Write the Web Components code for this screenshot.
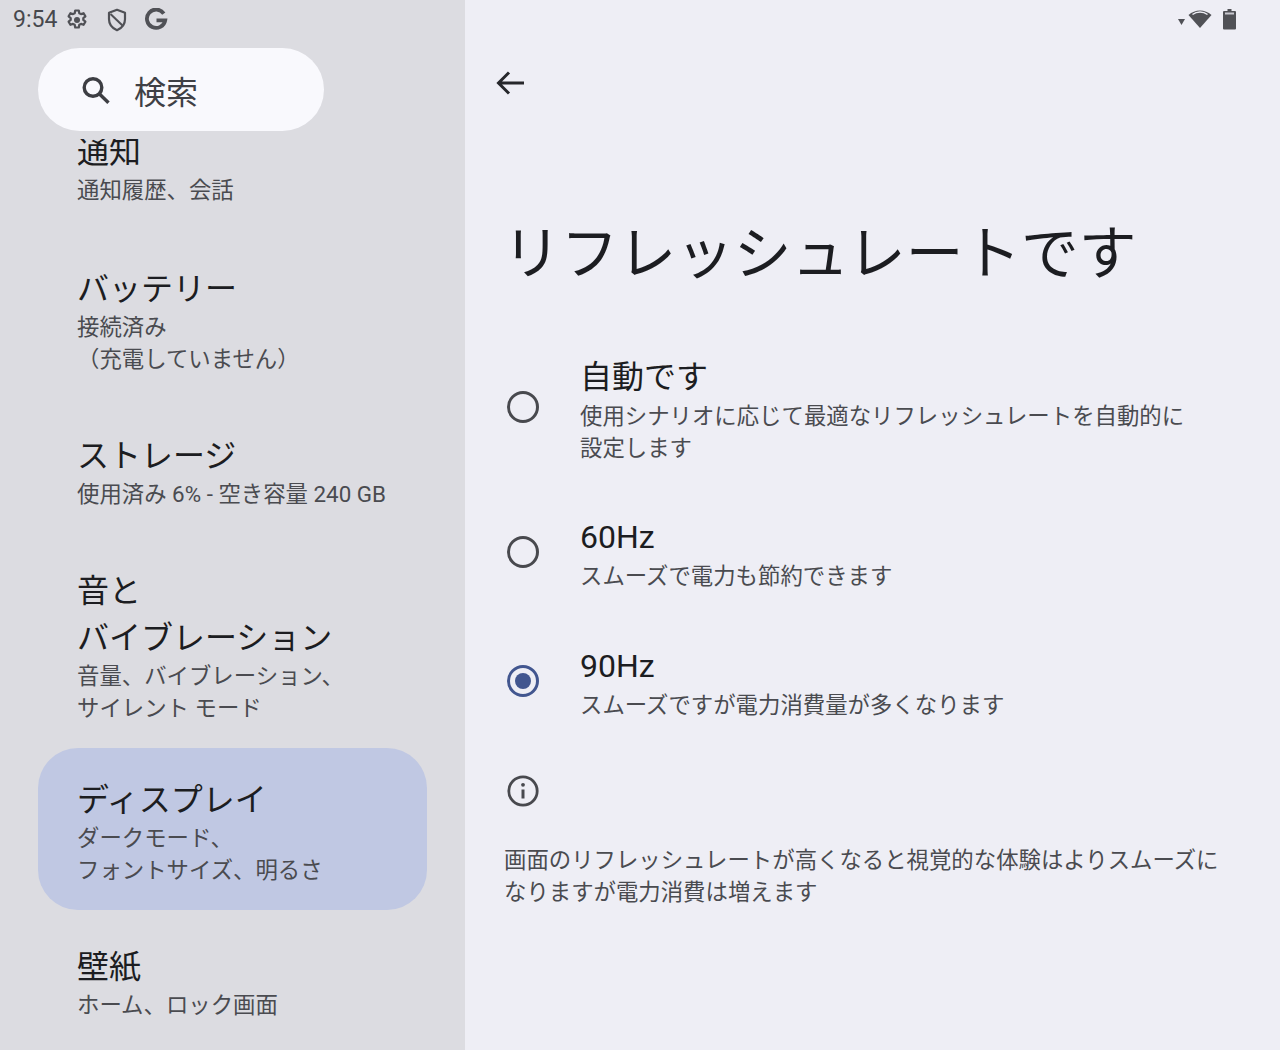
<!DOCTYPE html>
<html lang="ja"><head><meta charset="utf-8"><title>リフレッシュレート</title>
<style>
html,body{margin:0;padding:0;height:1050px;overflow:hidden}
body{font-family:Roboto,"Noto Sans CJK JP",sans-serif;color:#1b1c20}
</style></head><body>
<settings-app>
  <settings-nav slot="nav">
    <status-left slot="status"></status-left>
    <search-pill slot="search">検索</search-pill>
    <nav-item title-text="通知" style="margin-bottom:2px">通知履歴、会話</nav-item>
    <nav-item title-text="バッテリー">接続済み<br>（充電していません）</nav-item>
    <nav-item title-text="ストレージ">使用済み 6% - 空き容量 240 GB</nav-item>
    <nav-item title-text="音と&#10;バイブレーション">音量、バイブレーション、<br>サイレント モード</nav-item>
    <nav-item title-text="ディスプレイ" selected>ダークモード、<br>フォントサイズ、明るさ</nav-item>
    <nav-item title-text="壁紙">ホーム、ロック画面</nav-item>
  </settings-nav>
  <refresh-page slot="main"></refresh-page>
</settings-app>
<script>
function def(name, css, html, init){
  customElements.define(name, class extends HTMLElement{
    constructor(){super();const r=this.attachShadow({mode:'open'});r.innerHTML='<style>'+css+'</style>'+html;if(init)this._i=init;}
    connectedCallback(){if(this._i)this._i(this.shadowRoot,this);}
  });
}
def('settings-app',`:host{display:grid;grid-template-columns:465px 1fr;width:1280px;height:1050px;overflow:hidden;background:#eeeef5}`,`<slot name="nav"></slot><slot name="main"></slot>`);
def('settings-nav',`:host{display:flex;flex-direction:column;height:1050px;overflow:hidden;background:#dcdce1}
.head{height:139px;margin-bottom:-39px;flex:none;position:relative;z-index:1;background:#dcdce1}
.list{display:flex;flex-direction:column;gap:5px;padding:0 38px}`,
`<div class="head"><slot name="status"></slot><slot name="search"></slot></div><div class="list"><slot></slot></div>`);
def('status-left',`:host{display:flex;align-items:center;height:39px;padding-left:13px;color:#47484d;font-size:23px}
svg{display:block;flex:none}`,
`<span>9:54</span>
<svg style="margin-left:8px" width="24" height="24" viewBox="0 0 24 24" fill="none" stroke="#505156" stroke-width="2.200"><path d="M10.200 2.500h3.600l.5 2.700 1.700.9 2.600-.9 1.800 3.100-2.100 1.800v1.800l2.100 1.800-1.800 3.100-2.600-.9-1.700.9-.5 2.700h-3.600l-.5-2.700-1.700-.9-2.600.9-1.800-3.100 2.100-1.800v-1.800L3.600 8.300l1.800-3.100 2.600.9 1.700-.9z" stroke-linejoin="round"/><circle cx="12" cy="12" r="3" fill="#505156" stroke="none"/></svg>
<svg style="margin-left:16px" width="24" height="24" viewBox="0 0 24 24" fill="none" stroke="#505156" stroke-width="2.200" stroke-linejoin="round"><path d="M12 1.800l8 3v6.400c0 5-3.400 9-8 11-4.600-2-8-6-8-11V4.800z"/><path d="M5.500 6l12.500 12" stroke-width="2"/></svg>
<svg style="margin-left:15px" width="24" height="24" viewBox="0 0 24 24" fill="none" stroke="#505156" stroke-width="3.800"><path d="M19.800 5.600A9.200 9.200 0 1 0 21.200 12.300H12.500"/></svg>`);
def('search-pill',`:host{display:flex;align-items:center;position:absolute;left:38px;top:48px;width:286px;height:83px;box-sizing:border-box;padding-left:40px;border-radius:42px;background:#f9f9fd;color:#3f4045;font-size:32px}
svg{flex:none;margin-right:20px}`,
`<svg width="36" height="36" viewBox="0 0 36 36" fill="none" stroke="#3d3e43" stroke-width="3.400"><circle cx="15" cy="15.500" r="8.800"/><path d="M21.500 22l9 8.800"/></svg><slot></slot>`);
def('nav-item',`:host{display:block;box-sizing:border-box;padding:29px 39px 24px;border-radius:40px;margin:0}
:host([selected]){background:#c0c8e3;margin-top:-5px}
.t{font-size:32px;line-height:47px;margin-bottom:-2px;color:#1c1d21;white-space:pre-line}
.s{font-size:22.400px;line-height:32px;color:#4a4b50}`,
`<div class="t"></div><div class="s"><slot></slot></div>`,
(r,h)=>{r.querySelector('.t').textContent=h.getAttribute('title-text')});
def('radio-row',`:host{display:flex;align-items:center;gap:41px;padding-left:42px}
.c{width:26px;height:26px;border:3px solid #48494e;border-radius:50%;flex:none;display:flex;align-items:center;justify-content:center;margin-top:var(--radio-up,-2px)}
:host([checked]) .c{border-color:#42568f}
:host([checked]) .d{width:16px;height:16px;border-radius:50%;background:#42568f}
.t{font-size:32px;line-height:46px;color:#1c1d21}
.s{font-size:22.400px;line-height:32px;color:#4a4b50}`,
`<div class="c"><div class="d"></div></div><div><div class="t"></div><div class="s"><slot></slot></div></div>`,
(r,h)=>{r.querySelector('.t').textContent=h.getAttribute('title-text')});
def('refresh-page',`:host{display:flex;flex-direction:column;height:1050px;overflow:hidden;background:#eeeef5}
.status{height:38px;display:flex;align-items:center;justify-content:flex-end;padding-right:43px;flex:none}
.status svg{display:block}
.back{margin:26px 0 0 28px;display:block;flex:none}
h1{margin:115px 0 0 38px;font-weight:400;font-size:57.700px;line-height:78px;color:#1c1d21;height:78px;white-space:nowrap}
.rows{margin-top:56px;display:flex;flex-direction:column}
.info{margin:29px 0 0 42px;display:block;flex:none}
p{margin:37px 50px 0 39px;font-size:22.400px;line-height:32px;color:#4a4b50}`,
`<div class="status">
<svg width="9" height="9" viewBox="0 0 9 9" style="margin-top:5px"><path d="M1 2h7L4.500 8z" fill="#505156"/></svg>
<svg style="margin-left:2px" width="24" height="20" viewBox="0 0 24 20"><path d="M12 19L.5 6C7 0 17 0 23.500 6z" fill="#505156"/><path d="M4.500 5.500C9 2.200 15 2.200 19.500 5.500" stroke="#eeeef5" stroke-width="1.500" fill="none"/></svg>
<svg style="margin-left:10px" width="15" height="22" viewBox="0 0 15 22"><path d="M1 4a1 1 0 0 1 1-1h3.500V1h4v2H13a1 1 0 0 1 1 1v16.500a1 1 0 0 1-1 1H2a1 1 0 0 1-1-1z" fill="#505156"/><path d="M3 5.500h9" stroke="#c9c9d0" stroke-width="2"/></svg>
</div>
<svg class="back" width="36" height="36" viewBox="0 0 36 36" fill="none" stroke="#26272b" stroke-width="3"><path d="M31 19H6M16 8.500L5.500 19 16 29.500"/></svg>
<h1>リフレッシュレートです</h1>
<div class="rows">
<radio-row title-text="自動です" style="height:120px;--radio-up:-5px">使用シナリオに応じて最適なリフレッシュレートを自動的に<br>設定します</radio-row>
<radio-row title-text="60Hz" style="height:129px;margin-top:19px">スムーズで電力も節約できます</radio-row>
<radio-row title-text="90Hz" checked style="height:129px">スムーズですが電力消費量が多くなります</radio-row>
</div>
<svg class="info" width="32" height="32" viewBox="0 0 32 32" fill="none" stroke="#48494e" stroke-width="2.800"><circle cx="16" cy="16" r="14.200"/><path d="M16 14.500v9" stroke-width="3"/><circle cx="16" cy="9.800" r="1.900" fill="#48494e" stroke="none"/></svg>
<p>画面のリフレッシュレートが高くなると視覚的な体験はよりスムーズに<br>なりますが電力消費は増えます</p>`);
</script>
</body></html>
